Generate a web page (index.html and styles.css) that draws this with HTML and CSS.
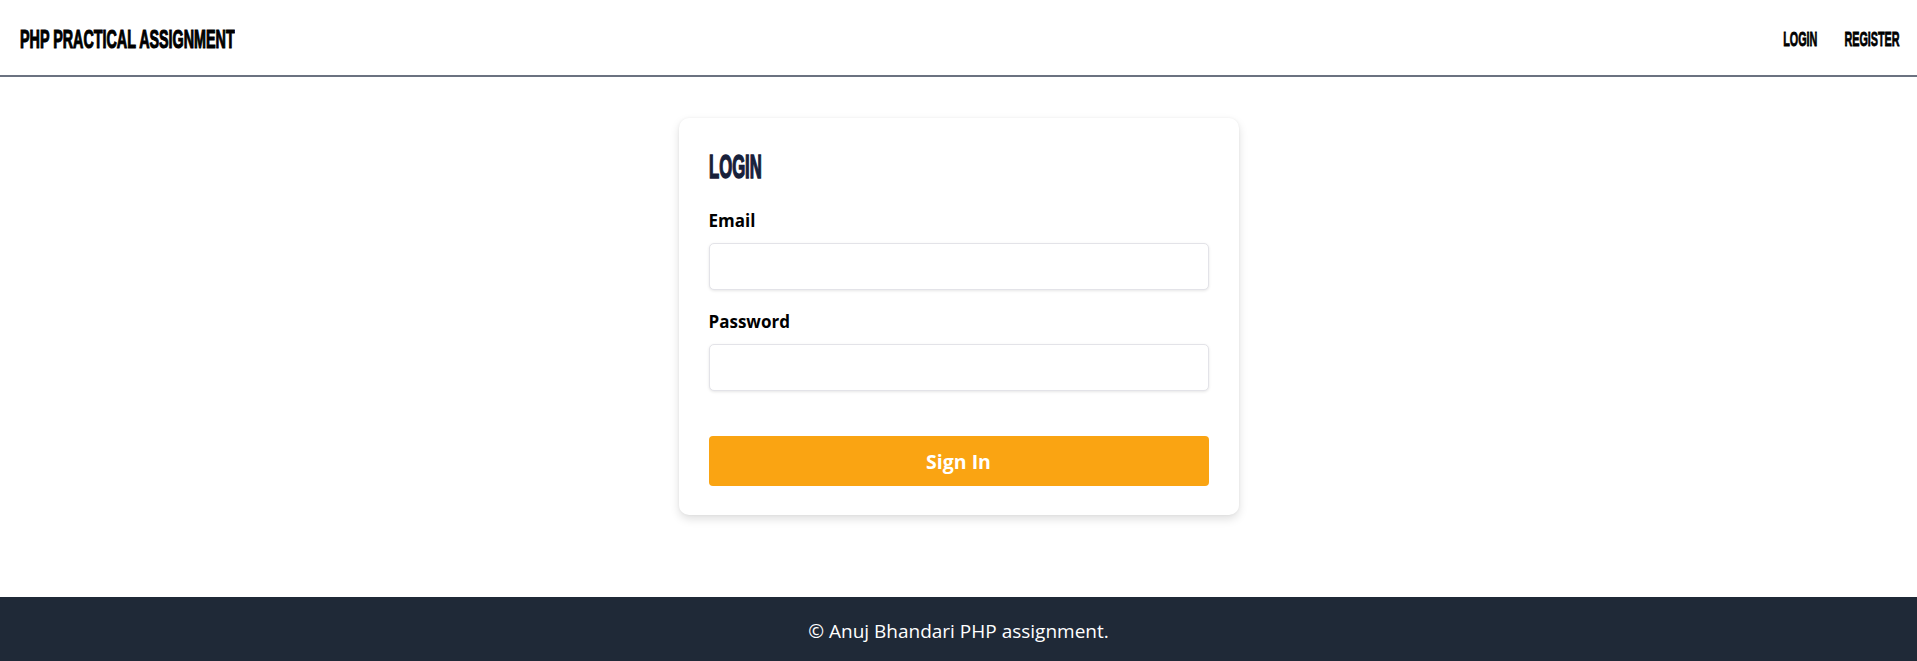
FILE: index.html
```html
<!DOCTYPE html>
<html lang="en">
<head>
<meta charset="utf-8">
<title>PHP Practical Assignment</title>
<link rel="stylesheet" href="styles.css">
</head>
<body>
<header class="site-header">
  <a class="brand" href="#"><span class="brand-text">PHP PRACTICAL ASSIGNMENT</span></a>
  <nav class="nav">
    <a class="nav-link" href="#">LOGIN</a>
    <a class="nav-link" href="#">REGISTER</a>
  </nav>
</header>
<main class="main">
  <form class="card">
    <h1 class="card-title"><span class="card-title-text">LOGIN</span></h1>
    <label class="field-label" for="email">Email</label>
    <input class="field-input" id="email" type="email">
    <label class="field-label field-label-gap" for="password">Password</label>
    <input class="field-input" id="password" type="password">
    <button class="btn" type="button">Sign In</button>
  </form>
</main>
<footer class="site-footer">© Anuj Bhandari PHP assignment.</footer>
</body>
</html>
```
FILE: styles.css
```css
* { box-sizing: border-box; }
html, body { margin: 0; padding: 0; }
body {
  height: 100vh;
  display: flex;
  flex-direction: column;
  background: #fff;
  font-family: "Open Sans", "Noto Sans", sans-serif;
  color: #000;
}
.site-header {
  height: 77px;
  flex: none;
  display: flex;
  align-items: center;
  justify-content: space-between;
  padding: 0 17px 0 20px;
  border-bottom: 2px solid #6b7280;
}
.brand {
  color: #000;
  text-decoration: none;
  font-family: "Liberation Sans", "Arial", sans-serif;
  font-weight: 700;
  font-size: 25px;
  line-height: 30px;
  margin-top: 2px;
}
.brand-text {
  display: inline-block;
  transform: scaleX(0.573);
  transform-origin: left center;
  -webkit-text-stroke: 1.1px #000;
}
.nav {
  display: flex;
  gap: 50px;
  transform: scaleX(0.54);
  transform-origin: right center;
  margin-top: 2px;
}
.nav-link {
  color: #000;
  text-decoration: none;
  font-family: "Liberation Sans", "Arial", sans-serif;
  font-weight: 700;
  font-size: 20px;
  line-height: 24px;
  -webkit-text-stroke: 0.8px #000;
}
.main {
  flex: 1;
  display: flex;
  justify-content: center;
  align-items: flex-start;
  padding-top: 41px;
}
.card {
  width: 560px;
  background: #fff;
  border-radius: 10px;
  box-shadow: 0 4px 10px rgba(0,0,0,0.13), 0 0 3px rgba(0,0,0,0.05);
  padding: 28px 30px 29px;
  display: flex;
  flex-direction: column;
}
.card-title {
  margin: 0 0 23px;
  font-family: "Liberation Sans", "Arial", sans-serif;
  font-weight: 700;
  font-size: 34px;
  line-height: 40px;
  color: #17203a;
}
.card-title-text {
  display: inline-block;
  transform: scaleX(0.49);
  transform-origin: left center;
  -webkit-text-stroke: 1.6px #17203a;
}
.field-label {
  font-size: 17px;
  font-weight: 700;
  line-height: 24px;
  margin-bottom: 10px;
  color: #000;
}
.field-label-gap { margin-top: 20px; }
.field-input {
  height: 47px;
  width: 100%;
  border: 1px solid #e3e3e8;
  border-radius: 5px;
  box-shadow: 0 1px 3px rgba(0,0,0,0.1);
  background: #fff;
  font-size: 16px;
  padding: 0 12px;
}
.btn {
  margin-top: 45px;
  height: 50px;
  width: 100%;
  border: none;
  border-radius: 4px;
  background: #faa412;
  color: #fff;
  font-family: "Open Sans", "Noto Sans", sans-serif;
  font-weight: 700;
  font-size: 19.5px;
}
.site-footer {
  flex: none;
  height: 64px;
  background: #1f2937;
  color: #fff;
  display: flex;
  align-items: center;
  justify-content: center;
  font-size: 19px;
  padding-top: 4px;
}
```
